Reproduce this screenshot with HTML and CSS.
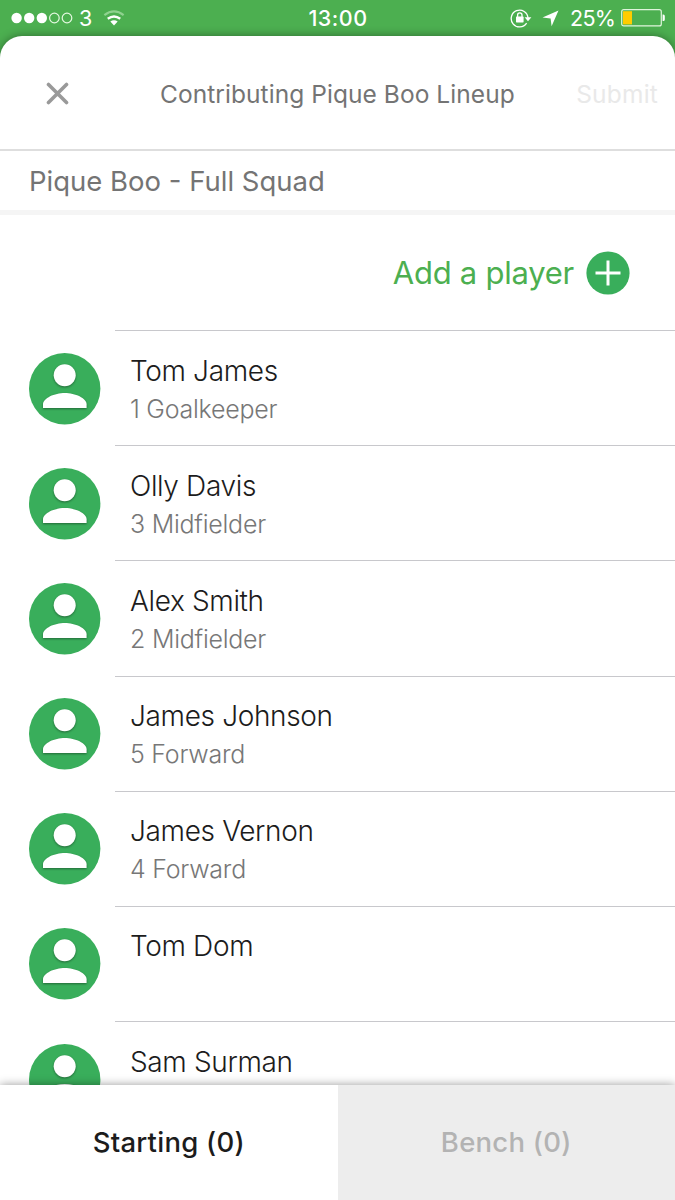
FILE: index.html
```html
<!doctype html>
<html lang="en">
<head>
  <meta charset="UTF-8">
  <meta name="viewport" content="width=device-width, initial-scale=1.0">
  <title>Pique Boo Lineup</title>
  <link rel="stylesheet" href="styles.css">
</head>
<body>
  <!-- shared icons -->
  <svg class="sprite" width="0" height="0">
    <symbol id="avatar" viewBox="0 0 72 72">
      <circle cx="35.700" cy="35.700" r="35.700" fill="#39ae5b"/>
      <g class="person">
        <circle cx="35.700" cy="22.2" r="11" fill="#fff"/>
        <path d="M14 55v-3.800c0-6 11.500-11.200 21.800-11.200s21.800 5.200 21.800 11.200V55z" fill="#fff"/>
      </g>
    </symbol>
  </svg>

  <div class="app">
    <div class="status-bar">
      <div class="status-left">
        <svg class="signal" width="62" height="12" viewBox="0 0 62 12">
          <g fill="#fff">
            <circle cx="5.600" cy="6" r="5.200"/>
            <circle cx="18.200" cy="6" r="5.200"/>
            <circle cx="30.800" cy="6" r="5.200"/>
          </g>
          <g fill="none" stroke="#e4f8e0" stroke-width="1.200">
            <circle cx="43.400" cy="6" r="4.800"/>
            <circle cx="56" cy="6" r="4.800"/>
          </g>
        </svg>
        <span class="carrier">3</span>
        <svg class="wifi" width="22" height="17" viewBox="0 0 24 18">
          <path d="M1.500 5.300Q12-2.700 22.500 5.300" fill="none" stroke="#8fd28f" stroke-width="2.400"/>
          <path d="M5.200 9.300Q12 4.200 18.800 9.300" fill="none" stroke="#fff" stroke-width="2.600"/>
          <path d="M8 12.400Q12 9.600 16 12.400L12 16.600z" fill="#fff"/>
        </svg>
      </div>
      <span class="clock">13:00</span>
      <div class="status-right">
        <svg class="lock" width="22" height="20" viewBox="0 0 22 20">
          <path d="M16.600 15.200A8.400 8.400 0 1 1 18 10" fill="none" stroke="#fff" stroke-width="1.300"/>
          <path d="M14.600 9.200h6.800L18 13.300z" fill="#fff"/>
          <rect x="6" y="8.600" width="7.600" height="5.800" rx="0.600" fill="#fff"/>
          <path d="M7.600 9V7a2.200 2.200 0 0 1 4.400 0v2" fill="none" stroke="#fff" stroke-width="1.300"/>
        </svg>
        <svg class="location" width="17" height="17" viewBox="0 0 17 17">
          <path d="M16.500 0.500L9.600 16.300L8.600 8.600L0.500 7.600z" fill="#fff"/>
        </svg>
        <span class="percent">25%</span>
        <svg class="battery" width="44" height="18" viewBox="0 0 44 18">
          <rect x="0.700" y="0.700" width="39.600" height="16.200" rx="2" fill="none" stroke="#dff5dc" stroke-width="1.200"/>
          <rect x="2" y="2.200" width="9" height="13.200" fill="#ffcc00"/>
          <path d="M41.600 5.500h.7a1.500 1.500 0 0 1 1.500 1.500v3.600a1.500 1.500 0 0 1-1.500 1.500h-.7z" fill="#fff"/>
        </svg>
      </div>
    </div>

    <div class="sheet">
      <header class="header">
        <svg class="close" width="24" height="24" viewBox="0 0 24 24">
          <path d="M2.500 2.500L20.500 20.500M20.500 2.500L2.500 20.500" fill="none" stroke="#999" stroke-width="3.600" stroke-linecap="round"/>
        </svg>
        <h1 class="title">Contributing Pique Boo Lineup</h1>
        <span class="submit">Submit</span>
      </header>

      <div class="squad-name"><span>Pique Boo - Full Squad</span></div>

      <div class="add-player">
        <span class="add-label">Add a player</span>
        <svg width="44" height="44" viewBox="0 0 44 44">
          <circle cx="22" cy="22" r="21.600" fill="#39ae5b"/>
          <path d="M22 9.500v25M9.500 22h25" stroke="#fff" stroke-width="3"/>
        </svg>
      </div>

      <ul class="players">
        <li class="player">
          <svg class="avatar"><use href="#avatar"/></svg>
          <div class="info">
            <div class="name">Tom James</div>
            <div class="role">1 Goalkeeper</div>
          </div>
        </li>
        <li class="player">
          <svg class="avatar"><use href="#avatar"/></svg>
          <div class="info">
            <div class="name">Olly Davis</div>
            <div class="role">3 Midfielder</div>
          </div>
        </li>
        <li class="player">
          <svg class="avatar"><use href="#avatar"/></svg>
          <div class="info">
            <div class="name">Alex Smith</div>
            <div class="role">2 Midfielder</div>
          </div>
        </li>
        <li class="player">
          <svg class="avatar"><use href="#avatar"/></svg>
          <div class="info">
            <div class="name">James Johnson</div>
            <div class="role">5 Forward</div>
          </div>
        </li>
        <li class="player">
          <svg class="avatar"><use href="#avatar"/></svg>
          <div class="info">
            <div class="name">James Vernon</div>
            <div class="role">4 Forward</div>
          </div>
        </li>
        <li class="player">
          <svg class="avatar"><use href="#avatar"/></svg>
          <div class="info">
            <div class="name">Tom Dom</div>
          </div>
        </li>
        <li class="player">
          <svg class="avatar"><use href="#avatar"/></svg>
          <div class="info">
            <div class="name">Sam Surman</div>
          </div>
        </li>
      </ul>
    </div>

    <nav class="tabs">
      <div class="tab active">Starting (0)</div>
      <div class="tab">Bench (0)</div>
    </nav>
  </div>
</body>
</html>
```
FILE: styles.css
```css
* {
  box-sizing: border-box;
}

body {
  margin: 0;
  background: #4caf50;
  font-family: Inter, 'Liberation Sans', sans-serif;
  overflow: hidden;
}

svg {
  display: block;
  flex-shrink: 0;
}

.sprite {
  position: absolute;
}

.app {
  width: 675px;
  height: 1200px;
  display: flex;
  flex-direction: column;
  overflow: hidden;
}

/* Status bar */
.status-bar {
  height: 36px;
  flex-shrink: 0;
  display: grid;
  grid-template-columns: 1fr auto 1fr;
  align-items: center;
  padding: 0 10px 0 11px;
  color: #fff;
  font-size: 21.5px;
  line-height: 36px;
}

.status-left,
.status-right {
  display: flex;
  align-items: center;
}

.status-right {
  justify-content: flex-end;
}

.carrier {
  margin-left: 6px;
}

.wifi {
  margin-left: 11px;
}

.clock {
  font-weight: 500;
  letter-spacing: 0.5px;
}

.location {
  margin: 0 11px 0 10px;
}

.percent {
  letter-spacing: -0.8px;
}

.battery {
  margin-left: 6px;
}

/* White sheet */
.sheet {
  flex: 1;
  min-height: 0;
  background: #fff;
  border-radius: 22px 22px 0 0;
  box-shadow: 0 0 10px rgba(0, 0, 0, 0.4);
  overflow: hidden;
}

.header {
  height: 115px;
  border-bottom: 2px solid #dedede;
  display: flex;
  align-items: center;
  padding: 2px 17px 0 46px;
  font-size: 24.5px;
}

.title {
  margin: 0 0 0 90px;
  font-size: 24.5px;
  font-weight: 400;
  letter-spacing: 0.06px;
  color: #747474;
  white-space: nowrap;
}

.submit {
  margin-left: auto;
  letter-spacing: 0.2px;
  color: #e9e9e9;
}

.squad-name {
  height: 64px;
  padding-left: 29px;
  border-bottom: 5px solid #f5f5f5;
  font-size: 27.5px;
  line-height: 60px;
  color: #747474;
}

.add-player {
  height: 115px;
  display: flex;
  align-items: center;
  justify-content: flex-end;
  gap: 12px;
  padding-right: 45px;
  font-size: 31px;
  letter-spacing: -0.25px;
  color: #4caf50;
}

/* Players */
.players {
  margin: 0;
  padding: 0;
  list-style: none;
}

.player {
  height: 115.2px;
  display: flex;
  padding-left: 29px;
}

.avatar {
  width: 72px;
  height: 72px;
  margin-top: 22.5px;
}

.person {
  filter: drop-shadow(0 1px 1px rgba(0, 0, 0, 0.4));
}

.info {
  flex: 1;
  margin-left: 14px;
  padding: 20.5px 0 0 15px;
  border-top: 1px solid #c8c8cc;
}

.name {
  font-size: 28px;
  font-weight: 300;
  letter-spacing: -0.35px;
  line-height: 38px;
  color: #1c1c1c;
}

.role {
  font-size: 25px;
  font-weight: 300;
  letter-spacing: -0.25px;
  line-height: 38px;
  color: #777;
}

/* Bottom tabs */
.tabs {
  position: relative;
  height: 115px;
  flex-shrink: 0;
  display: flex;
  background: #fff;
  box-shadow: 0 0 9px rgba(0, 0, 0, 0.4);
}

.tab {
  flex: 1;
  background: #ededed;
  color: #b3b3b3;
  font-size: 27.5px;
  font-weight: 500;
  letter-spacing: 0.25px;
  line-height: 115px;
  text-align: center;
}

.tab.active {
  background: #fff;
  color: #1c1c1c;
}
```
